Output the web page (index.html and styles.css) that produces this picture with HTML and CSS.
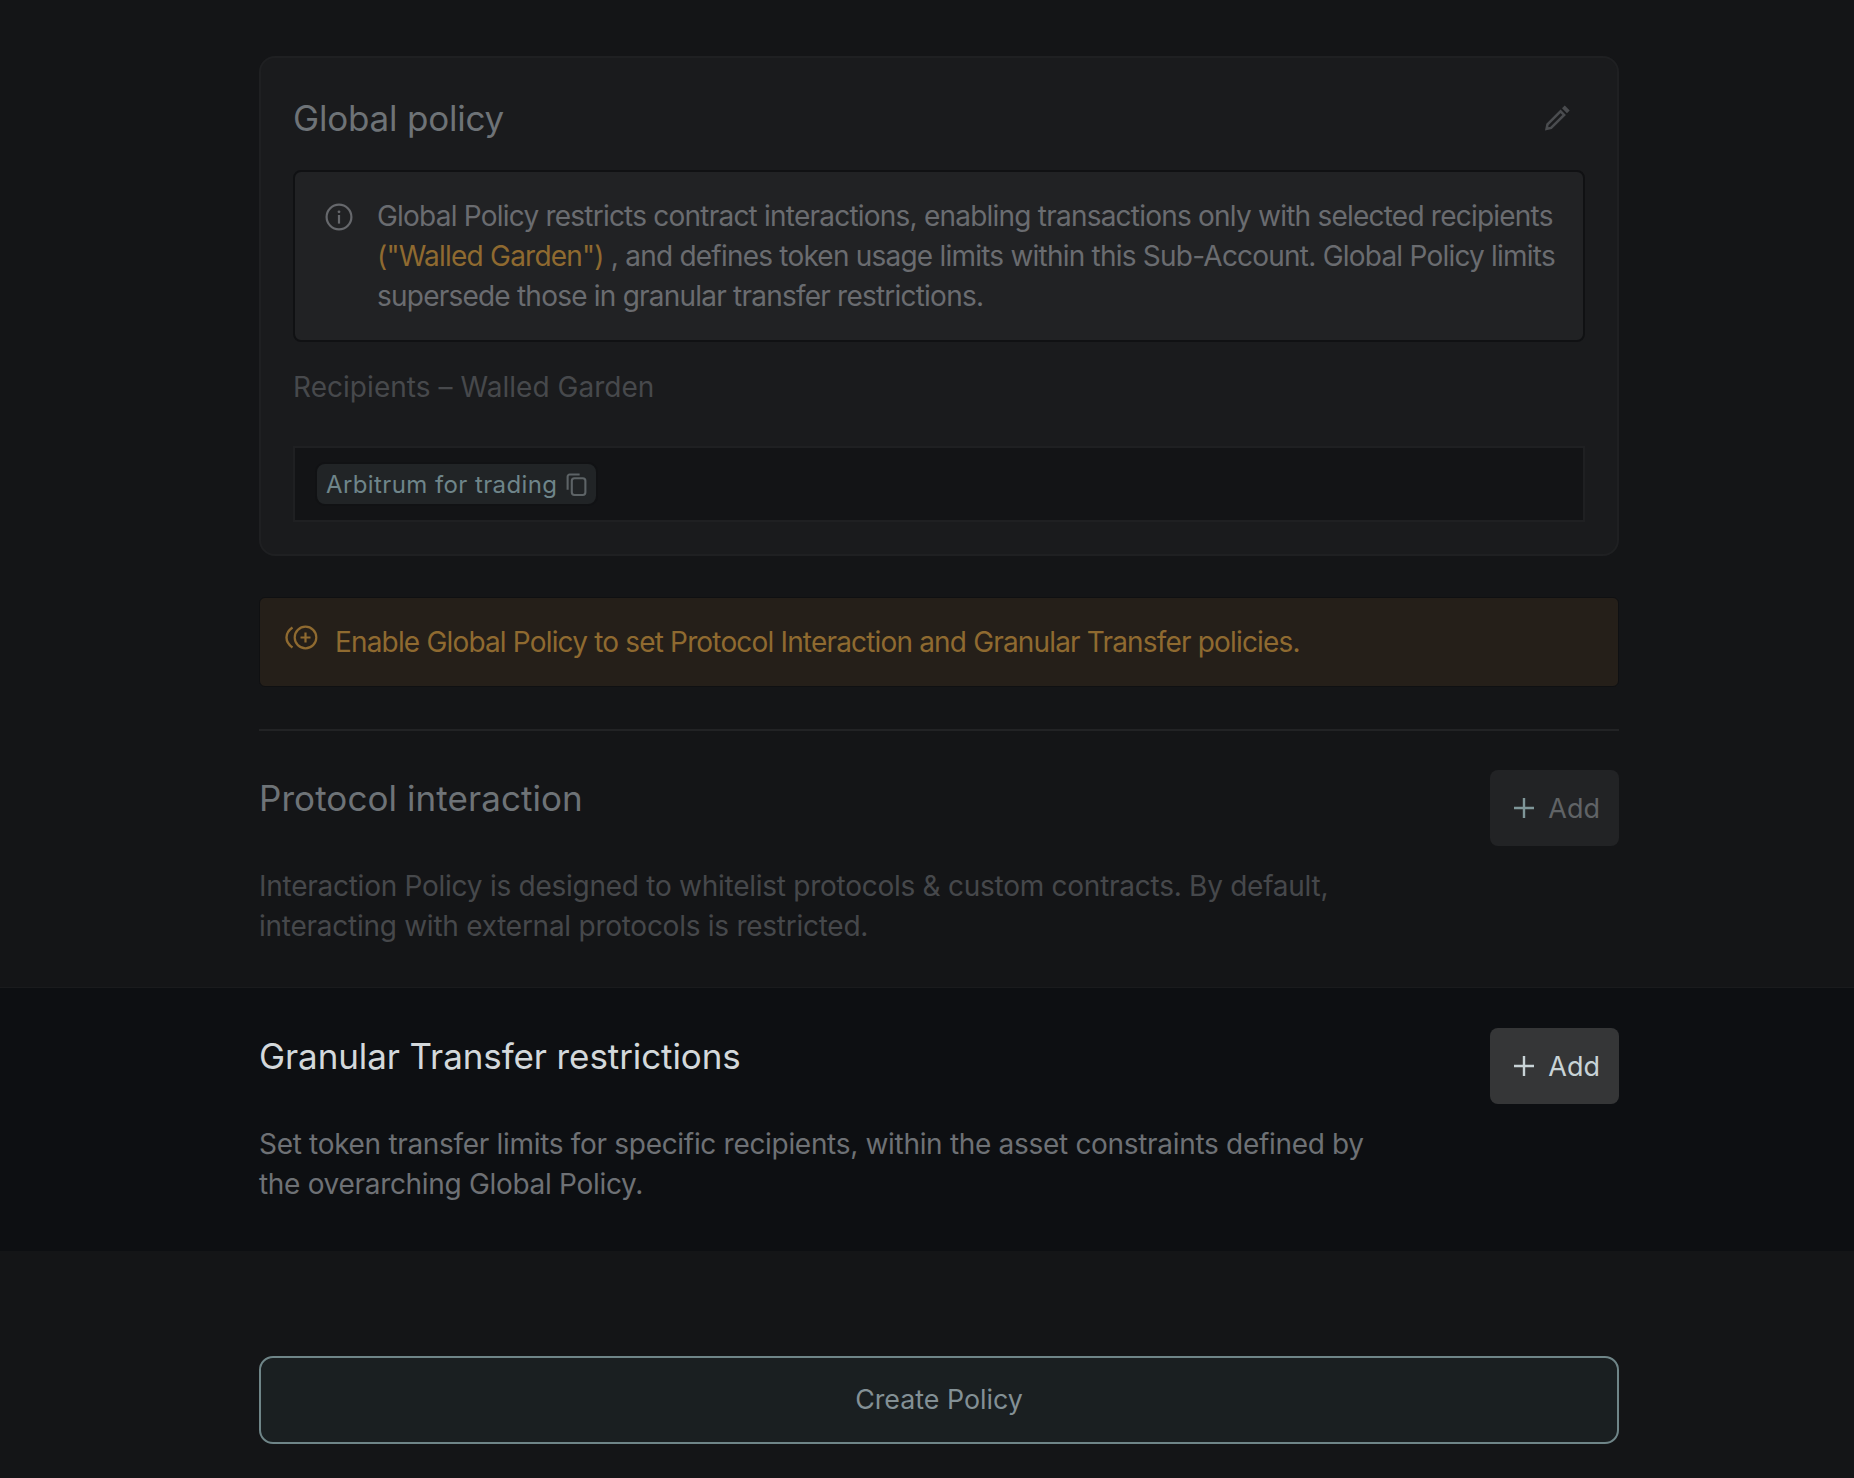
FILE: index.html
```html
<!DOCTYPE html>
<html lang="en">
<head>
<meta charset="utf-8">
<title>Create Policy</title>
<link rel="stylesheet" href="styles.css">
</head>
<body>
<main class="page">
  <div class="upper">
    <section class="card">
      <header class="card-head">
        <h2 class="title title-global">Global policy</h2>
        <svg class="icon-edit" viewBox="0 0 30 30" width="27" height="27"><path d="M4 26.500l1-5L19.500 7l4 4L9 25.500z" fill="none" stroke="#4a4c4f" stroke-width="2.800"/><path d="M22.200 3.600l2-2 4.400 4.400-2 2z" fill="#4a4c4f" stroke="#4a4c4f" stroke-width="1.500"/></svg>
      </header>
      <div class="info">
        <svg class="icon-info" viewBox="0 0 28 28" width="28" height="28"><circle cx="14" cy="14" r="12.400" fill="none" stroke="#66686c" stroke-width="2.200"/><circle cx="14" cy="8.800" r="1.400" fill="#66686c"/><rect x="12.900" y="12" width="2.200" height="8.600" fill="#66686c"/></svg>
        <p class="info-text">Global Policy restricts contract interactions, enabling transactions only with selected recipients <span class="amber">("Walled Garden")</span> , and defines token usage limits within this Sub-Account. Global Policy limits supersede those in granular transfer restrictions.</p>
      </div>
      <h3 class="label">Recipients – Walled Garden</h3>
      <div class="recipients">
        <span class="chip">Arbitrum for trading
          <svg class="icon-copy" viewBox="0 0 20 22" width="21" height="23"><rect x="5.500" y="5" width="13" height="16" rx="2.500" fill="none" stroke="#5d6366" stroke-width="2"/><path d="M1.500 16V3.500a2 2 0 0 1 2-2H13" fill="none" stroke="#5d6366" stroke-width="2"/></svg>
        </span>
      </div>
    </section>
    <div class="notice">
      <svg class="icon-notice" viewBox="0 0 34 26" width="34" height="26"><circle cx="20.500" cy="12.500" r="10.800" fill="none" stroke="#8f6a30" stroke-width="2.200"/><path d="M20.500 7.500v10M15.500 12.500h10" stroke="#8f6a30" stroke-width="2.200" fill="none"/><path d="M7.500 2.500C-.5 8-.5 17 7.500 22.500" stroke="#8f6a30" stroke-width="2.400" fill="none"/></svg>
      <p class="notice-text">Enable Global Policy to set Protocol Interaction and Granular Transfer policies.</p>
    </div>
  </div>
  <section class="row row-dim">
    <div class="row-inner row-inner-rule">
      <div class="row-head">
        <h2 class="title title-dim">Protocol interaction</h2>
        <button class="add add-dim" type="button"><svg class="icon-plus" viewBox="0 0 20 20" width="20" height="20"><path d="M10 0v20M0 10h20" stroke="currentColor" stroke-width="2.400" fill="none"/></svg><span class="add-label">Add</span></button>
      </div>
      <p class="desc desc-dim">Interaction Policy is designed to whitelist protocols &amp; custom contracts. By default, interacting with external protocols is restricted.</p>
    </div>
  </section>
  <section class="row row-active">
    <div class="row-inner">
      <div class="row-head">
        <h2 class="title title-bright">Granular Transfer restrictions</h2>
        <button class="add add-bright" type="button"><svg class="icon-plus" viewBox="0 0 20 20" width="20" height="20"><path d="M10 0v20M0 10h20" stroke="currentColor" stroke-width="2.400" fill="none"/></svg><span class="add-label">Add</span></button>
      </div>
      <p class="desc desc-bright">Set token transfer limits for specific recipients, within the asset constraints defined by the overarching Global Policy.</p>
    </div>
  </section>
  <div class="footer">
    <button class="create" type="button">Create Policy</button>
  </div>
</main>
</body>
</html>
```
FILE: styles.css
```css
* { box-sizing: border-box; }
html, body { margin: 0; padding: 0; }
body {
  background: #141517;
  font-family: Inter, "Liberation Sans", sans-serif;
  color: #6a6c70;
}
.page { width: 1854px; min-height: 1478px; }
.upper { padding: 56px 235px 42px 259px; }
.card {
  height: 500px;
  background: #1a1b1d;
  border: 2px solid #1f2022;
  border-radius: 16px;
  padding: 0 32px;
}
.card-head {
  height: 112px;
  display: flex;
  align-items: center;
  justify-content: space-between;
  padding: 8px 15px 0 0;
}
.title { margin: 0; font-size: 35px; font-weight: 400; line-height: 56px; letter-spacing: -0.1px; }
.title-global { color: #6e7377; letter-spacing: -0.2px; }
.title-dim { color: #6e7377; letter-spacing: 0.07px; }
.title-bright { color: #d3d8db; }
.icon-edit { display: block; }
.info {
  display: flex;
  gap: 24px;
  height: 172px;
  background: #212224;
  border: 2px solid #101113;
  border-radius: 8px;
  padding: 24px 20px 0 30px;
}
.icon-info { flex: none; margin-top: 7px; }
.info-text { margin: 0; font-size: 28px; line-height: 40px; letter-spacing: -0.78px; color: #6a6c70; }
.amber { color: #8f6a30; }
.label {
  margin: 0;
  padding-top: 25px;
  height: 104px;
  font-size: 28px;
  font-weight: 400;
  line-height: 40px;
  letter-spacing: 0.04px;
  color: #47494c;
}
.recipients {
  height: 76px;
  background: #131416;
  border: 2px solid #1f2022;
  padding: 14px 20px;
  display: flex;
  align-items: flex-start;
}
.chip {
  height: 44px;
  padding: 1px 9px 0 9px;
  display: inline-flex;
  align-items: center;
  gap: 9px;
  background: #212426;
  border: 2px solid #111214;
  border-radius: 10px;
  font-size: 24px;
  letter-spacing: 0.4px;
  color: #6f858a;
  white-space: nowrap;
}
.notice {
  margin-top: 41px;
  height: 90px;
  display: flex;
  align-items: center;
  gap: 16px;
  padding: 0 22px 0 25px;
  background: #251f19;
  border: 1px solid #0f1012;
  border-radius: 6px;
}
.icon-notice { flex: none; margin-top: -9px; }
.notice-text { margin: 0; font-size: 28px; line-height: 40px; letter-spacing: -0.83px; color: #8f6a30; }
.row-inner { padding-left: 259px; padding-right: 235px; }
.row-dim .row-inner { padding-top: 41px; }
.row-dim .desc { padding-bottom: 41px; }
.row-inner-rule { position: relative; }
.row-inner-rule::before {
  content: "";
  position: absolute;
  left: 259px;
  right: 235px;
  top: 0;
  height: 2px;
  background: #222325;
}
.row-active { background: #0d0f12; border-top: 1px solid #1a1b1d; height: 264px; }
.row-active .row-inner { padding-top: 40px; }
.row-head { display: flex; justify-content: space-between; align-items: flex-start; height: 76px; }
.add {
  width: 129px;
  height: 76px;
  display: flex;
  align-items: center;
  justify-content: flex-end;
  gap: 14px;
  padding: 0 19px 0 0;
  border: 0;
  border-radius: 8px;
  font-family: inherit;
  font-size: 27px;
}
.add-dim { background: #222325; color: #7f9699; }
.add-dim .add-label { color: #606366; }
.add-bright {
  color: #c8d3d6;
  background-color: #262728;
  background-image: radial-gradient(circle at 1px 1px, #363738 0.7px, transparent 0.8px);
  background-size: 2px 2px;
}
.desc { margin: 20px 0 0; max-width: 1120px; font-size: 28px; line-height: 40px; letter-spacing: -0.26px; }
.desc-dim { color: #46484b; }
.desc-bright { color: #6e7175; letter-spacing: -0.31px; }
.footer { padding: 105px 235px 0 259px; }
.create {
  width: 100%;
  height: 88px;
  padding: 0 0 2px;
  background: #1a1f21;
  border: 2px solid #6f8588;
  border-radius: 14px;
  font-family: inherit;
  font-size: 26.800px;
  color: #839095;
}
```
